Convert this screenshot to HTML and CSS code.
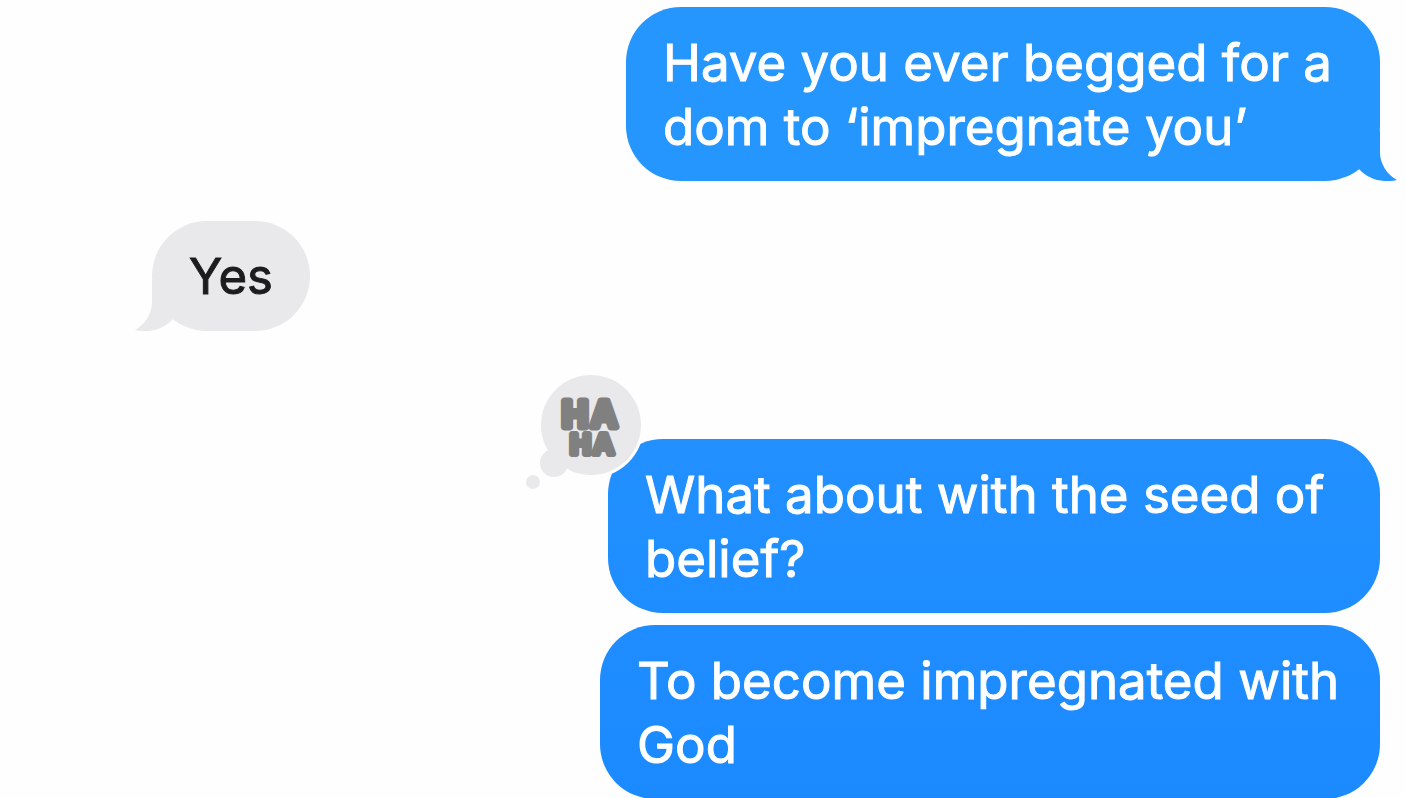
FILE: index.html
```html
<!DOCTYPE html>
<html lang="en">
<head>
<meta charset="utf-8">
<meta name="viewport" content="width=device-width, initial-scale=1">
<title>Messages</title>
<link rel="stylesheet" href="styles.css">
</head>
<body>
<main class="thread">
  <div class="group group--sent">
    <p class="bubble bubble--first">Have you ever begged for a dom to ‘impregnate you’
      <svg class="tail" viewBox="0 0 60 50" aria-hidden="true"><path d="M19 0H40V22C40 32 47 44 57 49C43 52 29 49 19 38Z"/></svg>
    </p>
  </div>
  <div class="group group--received">
    <p class="bubble">Yes
      <svg class="tail" viewBox="0 0 60 50" aria-hidden="true"><path d="M19 0H40V22C40 32 47 44 57 49C43 52 29 49 19 38Z"/></svg>
    </p>
  </div>
  <div class="group group--sent group--reacted">
    <p class="bubble bubble--second">What about with the seed of belief?
      <svg class="reaction" viewBox="0 0 130 130" role="img" aria-label="Haha reaction">
        <circle class="reaction-ring" cx="71" cy="55" r="53"/>
        <circle cx="71" cy="55" r="50"/>
        <circle cx="34" cy="93" r="14"/>
        <circle cx="13" cy="112" r="7"/>
        <text class="haha haha--large" x="42 71" y="57">HA</text>
        <text class="haha haha--small" x="50 73" y="84">HA</text>
      </svg>
    </p>
    <p class="bubble bubble--third">To become impregnated with God</p>
  </div>
</main>
</body>
</html>
```
FILE: styles.css
```css
* {
  box-sizing: border-box;
}

body {
  margin: 0;
  background: #fefefe;
  color: #1c1c1e;
  font-family: Inter, "Liberation Sans", sans-serif;
  font-size: 51px;
  line-height: 64px;
}

.thread {
  display: flex;
  flex-direction: column;
  gap: 40px;
  padding: 7px 26px 0 152px;
}

.group {
  display: flex;
  flex-direction: column;
  align-items: flex-start;
  gap: 12px;
}

.group--sent {
  align-items: flex-end;
  color: #fff;
  -webkit-text-stroke: 1px #fff;
}

.group--received {
  font-size: 49px;
  -webkit-text-stroke: 1px #1c1c1e;
}

.group--reacted {
  padding-top: 68px;
}

.bubble {
  position: relative;
  margin: 0;
  padding: 24px 37px 22px;
  border-radius: 55px;
  background: #e9e9eb;
  fill: #e9e9eb;
}

.bubble--first {
  max-width: 754px;
  background: #2696ff;
  fill: #2696ff;
}

.bubble--second {
  max-width: 772px;
  background: linear-gradient(#2290ff, #1e8dff);
}

.bubble--third {
  max-width: 780px;
  background: linear-gradient(#1f8dff, #1b8aff);
}

.tail {
  position: absolute;
  right: -20px;
  bottom: 0;
  width: 60px;
  height: 50px;
}

.group--received .tail {
  right: auto;
  left: -20px;
  transform: scaleX(-1);
}

.reaction {
  position: absolute;
  top: -69px;
  left: -88px;
  width: 130px;
  height: 130px;
}

.reaction-ring {
  fill: #fefefe;
}

.haha {
  fill: #808080;
  stroke: #808080;
  stroke-linejoin: round;
  font-family: "Liberation Sans", sans-serif;
  font-weight: 700;
  -webkit-text-stroke-color: #808080;
}

.haha--large {
  font-size: 36px;
  stroke-width: 7px;
}

.haha--small {
  font-size: 29px;
  stroke-width: 6px;
}
```
